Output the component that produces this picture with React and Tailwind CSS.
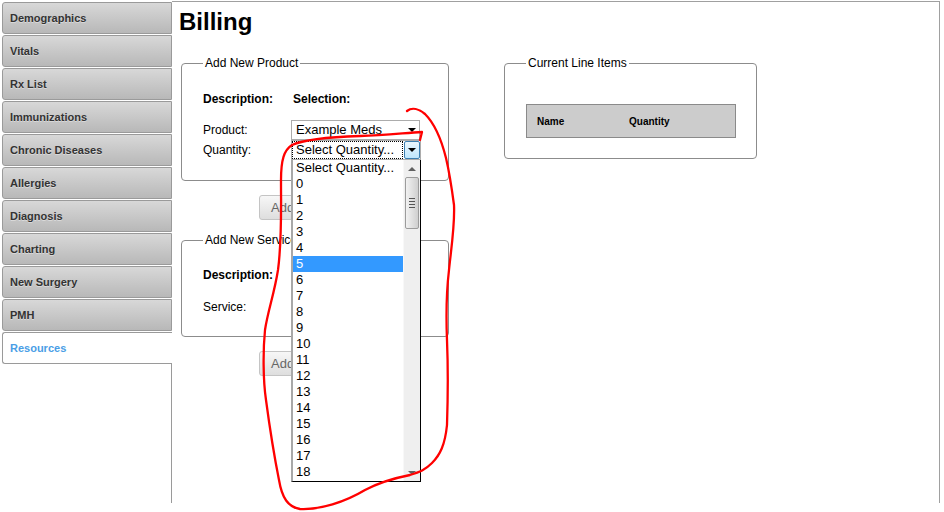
import React from 'react';

const tabs = [
  'Demographics',
  'Vitals',
  'Rx List',
  'Immunizations',
  'Chronic Diseases',
  'Allergies',
  'Diagnosis',
  'Charting',
  'New Surgery',
  'PMH',
];

const quantities = ['Select Quantity...', ...Array.from({ length: 19 }, (_, i) => String(i))];

function Caret({ color = 'border-t-black' }) {
  return (
    <span className={`block w-0 h-0 border-l-[4px] border-r-[4px] border-t-[4px] border-l-transparent border-r-transparent ${color}`} />
  );
}

function Tab({ label, active }) {
  if (active) {
    return (
      <div className="h-[32px] flex items-center pl-[7px] bg-white border border-r-0 border-[#9a9a9a] rounded-l-[3px] text-[11px] font-bold text-[#4a9ee6]">
        {label}
      </div>
    );
  }
  return (
    <div className="h-[32px] mb-px flex items-center pl-[7px] bg-gradient-to-b from-[#d8d8d8] to-[#b8b8b8] border border-[#9a9a9a] rounded-l-[3px] text-[11px] font-bold text-[#333] [text-shadow:0_1px_0_rgba(255,255,255,0.4)]">
      {label}
    </div>
  );
}

// only the start of the button shows; the open list covers the rest
function AddButton() {
  return (
    <button className="ml-[78px] h-[25px] pl-[11px] pr-[40px] rounded-[3px] border border-[#c4c4c4] bg-gradient-to-b from-[#f7f7f7] to-[#dedede] text-[13px] text-[#666] leading-none text-left">
      Add
    </button>
  );
}

function QuantityDropdown() {
  return (
    <div className="absolute left-0 top-[20px] w-[130px] h-[322px] bg-white border-l-2 border-r border-b border-l-[#a8a8a8] border-r-black border-b-black flex z-10">
      <div className="flex-1 flex flex-col">
        {quantities.map((q) => (
          <div
            key={q}
            className={`h-[16px] pl-[3px] text-[13px] leading-[16px] ${q === '5' ? 'bg-[#3399ff] text-white' : 'text-black'}`}
          >
            {q}
          </div>
        ))}
      </div>
      <div className="w-[17px] bg-[#efefef] border-l border-[#f8f8f8] flex flex-col items-center">
        <div className="h-[17px] flex items-center justify-center">
          <span className="block w-0 h-0 border-l-[4px] border-r-[4px] border-b-[4px] border-l-transparent border-r-transparent border-b-[#606060]" />
        </div>
        <div className="w-[14px] h-[52px] rounded-[2px] border border-[#9c9c9c] bg-gradient-to-r from-[#f2f2f2] to-[#cfcfcf] flex flex-col items-center justify-center gap-[2px]">
          <span className="block w-[6px] h-px bg-[#555]" />
          <span className="block w-[6px] h-px bg-[#555]" />
          <span className="block w-[6px] h-px bg-[#555]" />
          <span className="block w-[6px] h-px bg-[#555]" />
        </div>
        <div className="flex-1" />
        <div className="h-[17px] flex items-center justify-center">
          <Caret color="border-t-[#606060]" />
        </div>
      </div>
    </div>
  );
}

export default function App() {
  return (
    <div className="relative w-[944px] h-[512px] bg-white flex pt-px pl-[2px] font-['Liberation_Sans',Arial,sans-serif] overflow-hidden">
      <aside className="w-[170px] h-[501px] mt-px flex flex-col">
        {tabs.map((t) => (
          <Tab key={t} label={t} />
        ))}
        <Tab label="Resources" active />
        <div className="flex-1 border-r border-[#9a9a9a]" />
      </aside>

      <main className="w-[768px] h-[502px] border-t border-r border-[#a0a0a0]">
        <h1 className="pt-[6px] pl-[7px] text-[24px] leading-[28px] font-bold text-black">Billing</h1>

        <div className="flex items-start mt-[20px] ml-[9px]">
          <div className="w-[268px] flex flex-col">
            <fieldset className="border border-[#8c8c8c] rounded-[4px] pl-[21px] pb-[20px]">
              <legend className="px-[2px] text-[12px] leading-[15px] text-black">Add New Product</legend>
              <div className="mt-[21px] flex text-[12px] leading-[14px] font-bold text-black">
                <span className="w-[88px]">Description:</span>
                <span className="pl-[2px]">Selection:</span>
              </div>
              <div className="mt-[14px] flex items-center h-[20px] text-[12px] text-black">
                <span className="w-[88px]">Product:</span>
                <div className="w-[129px] h-[20px] border border-[#acacac] bg-white flex items-center pl-[4px] pr-[3px]">
                  <span className="flex-1 text-[13px]">Example Meds</span>
                  <Caret />
                </div>
              </div>
              <div className="flex items-center h-[20px] text-[12px] text-black">
                <span className="w-[88px]">Quantity:</span>
                <div className="relative">
                  <div className="w-[130px] h-[20px] border border-[#acacac] bg-white flex items-stretch">
                    <div className="flex-1 m-px outline outline-1 outline-dotted outline-black flex items-center pl-[3px] text-[13px]">
                      Select Quantity...
                    </div>
                    <div className="w-[16px] ml-[1px] border border-[#3c7fb1] rounded-[2px] bg-gradient-to-b from-[#eaf6fd] to-[#bee6fd] flex items-center justify-center">
                      <Caret />
                    </div>
                  </div>
                  <QuantityDropdown />
                </div>
              </div>
            </fieldset>

            <div className="mt-[14px]">
              <AddButton />
            </div>

            <fieldset className="mt-[13px] border border-[#8c8c8c] rounded-[4px] pl-[21px] pb-[19px]">
              <legend className="px-[2px] text-[12px] leading-[15px] text-black">Add New Service</legend>
              <div className="mt-[20px] flex text-[12px] leading-[14px] font-bold text-black">
                <span className="w-[88px]">Description:</span>
              </div>
              <div className="mt-[15px] flex items-center h-[20px] text-[12px] text-black">
                <span className="w-[88px]">Service:</span>
                <div className="w-[129px] h-[20px] border border-[#acacac] bg-white flex items-center justify-end pr-[3px]">
                  <Caret />
                </div>
              </div>
            </fieldset>

            <div className="mt-[14px]">
              <AddButton />
            </div>
          </div>

          <fieldset className="ml-[55px] w-[253px] border border-[#8c8c8c] rounded-[4px] pl-[21px] pb-[20px]">
            <legend className="px-[2px] text-[12px] leading-[15px] text-black">Current Line Items</legend>
            <div className="mt-[33px] w-[210px] h-[34px] bg-[#cccccc] border border-[#8a8a8a] flex items-center pl-[10px] text-[10px] font-bold text-black">
              <span className="w-[92px]">Name</span>
              <span>Quantity</span>
            </div>
          </fieldset>
        </div>
      </main>

      <svg className="absolute inset-0 pointer-events-none z-20" width="944" height="512" viewBox="0 0 944 512">
        <path
          d="M407,111 C412,107 419,109 425,114 C433,122 441,138 446,158 C450,175 452,190 454,205 C455,225 451,250 449,270 C446,295 446,315 447,340 C448,365 448,395 447,425 C445,445 440,455 432,463 C425,470 420,472 410,475 C395,478 380,482 365,490 C345,502 320,510 300,509 C288,507 282,498 279,480 C275,460 270,430 266,400 C263,380 263,350 265,330 C268,310 274,295 278,270 C282,240 281,210 281,180 C281,160 284,150 292,145 C305,139 330,137 360,136 C385,135 405,133 422,132 L420,140"
          fill="none"
          stroke="#ff0000"
          strokeWidth="2.3"
          strokeLinecap="round"
          strokeLinejoin="round"
        />
      </svg>
    </div>
  );
}
